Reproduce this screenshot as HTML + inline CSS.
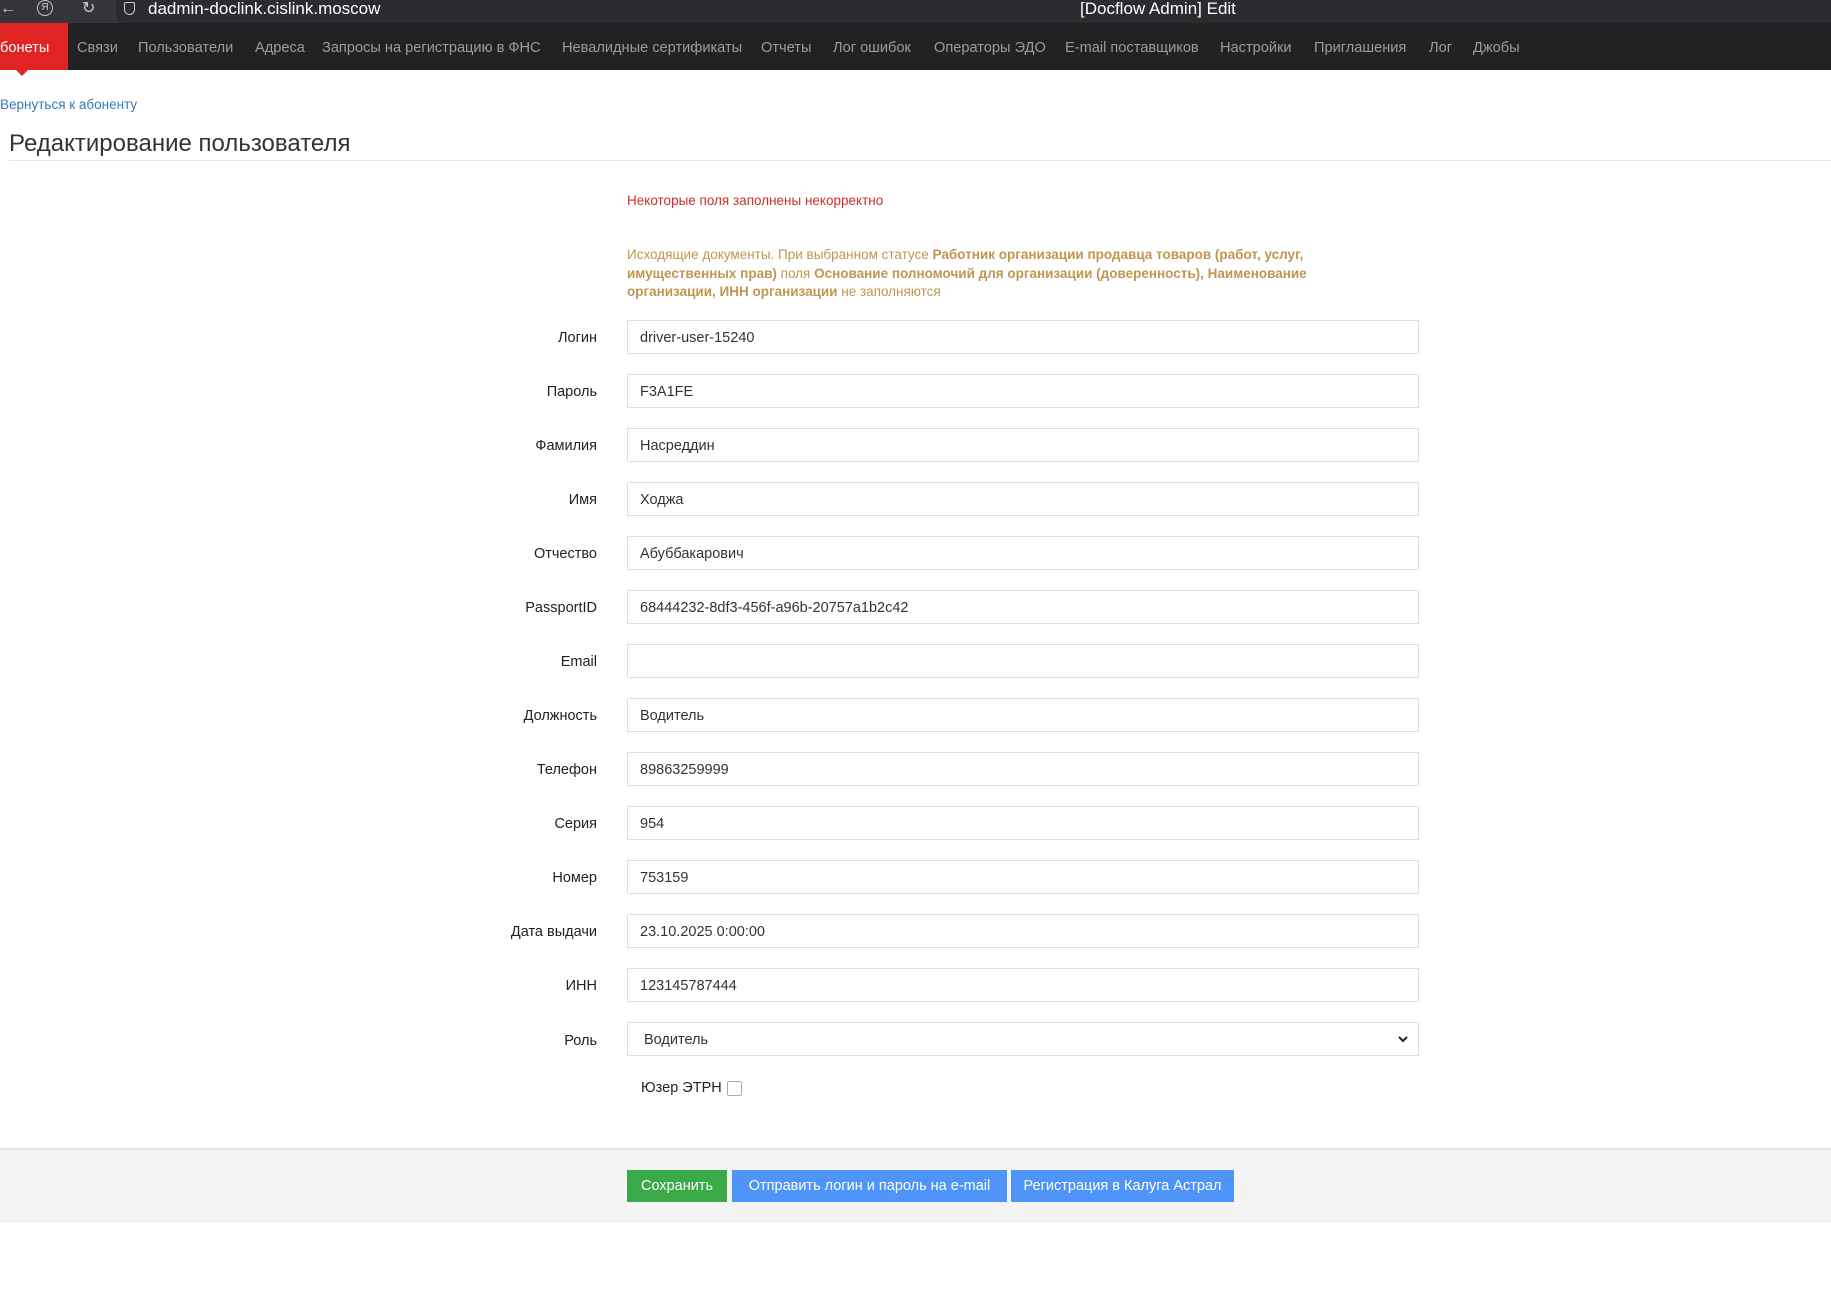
<!DOCTYPE html>
<html><head><meta charset="utf-8"><style>
*{box-sizing:border-box;margin:0;padding:0}
body{width:1831px;height:1311px;background:#fff;font-family:"Liberation Sans","DejaVu Sans",sans-serif;position:relative;overflow:hidden;color:#222}
.top{position:absolute;left:0;top:0;width:1831px;height:23px;background:#35363c}
.url{position:absolute;left:116px;top:0;width:1715px;height:23px;background:#2b2b32;border-radius:0 0 0 8px}
.nav{position:absolute;left:0;top:23px;width:1831px;height:47px;background:#222}
.nav span{position:absolute;top:2px;line-height:47px;font-size:14.6px;color:#9d9d9d;white-space:nowrap}
.act{position:absolute;left:0;top:23px;width:68px;height:47px;background:#e02424}
.tri{position:absolute;left:16px;top:70px;border-left:6px solid transparent;border-right:6px solid transparent;border-top:6px solid #e02424}
.a{position:absolute;white-space:nowrap}
.lab{position:absolute;width:597px;text-align:right;left:0;font-size:14.5px;color:#222;margin-top:3px}
.in{position:absolute;left:627px;width:792px;height:34px;border:1px solid #dedede;font-size:14.5px;line-height:35px;padding-left:12px;color:#333}
.btn{position:absolute;top:1170px;height:32px;line-height:33px;color:#fff;font-size:14.5px;text-align:center}
</style></head><body>
<div class="top"></div><div class="url"></div>
<div class="a" style="left:0;top:0;color:#ccc;font-size:16px;line-height:18px">←</div>
<div class="a" style="left:37px;top:0;width:16px;height:16px;border:1.5px solid #ccc;border-radius:50%;font-size:10px;color:#ccc;text-align:center;line-height:13px">Я</div>
<div class="a" style="left:82px;top:0;color:#ccc;font-size:16px;line-height:18px">↻</div>
<div class="a" style="left:124px;top:2px;width:11px;height:13px;border:1.5px solid #ccc;border-radius:2px 2px 6px 6px"></div>
<div class="a" style="left:148px;top:0;color:#fff;font-size:17px;line-height:18px">dadmin-doclink.cislink.moscow</div>
<div class="a" style="left:1080px;top:0;color:#fff;font-size:17px;line-height:18px">[Docflow Admin] Edit</div>
<div class="nav">
<span style="left:77px">Связи</span><span style="left:138px">Пользователи</span><span style="left:255px">Адреса</span><span style="left:322px">Запросы на регистрацию в ФНС</span><span style="left:562px">Невалидные сертификаты</span><span style="left:761px">Отчеты</span><span style="left:833px">Лог ошибок</span><span style="left:934px">Операторы ЭДО</span><span style="left:1065px">E-mail поставщиков</span><span style="left:1220px">Настройки</span><span style="left:1314px">Приглашения</span><span style="left:1429px">Лог</span><span style="left:1473px">Джобы</span>
</div>
<div class="act"></div><div class="tri"></div>
<div class="a" style="left:0;top:25px;line-height:47px;color:#fff;font-size:14.6px">бонеты</div>
<div class="a" style="left:0;top:97px;color:#337ab7;font-size:13.5px">Вернуться к абоненту</div>
<div class="a" style="left:9px;top:130px;font-size:24px;color:#333;font-weight:300">Редактирование пользователя</div>
<div class="a" style="left:9px;top:160px;width:1822px;height:1px;background:#e8e8e8"></div>
<div class="a" style="left:627px;top:193px;color:#c9302c;font-size:13.5px">Некоторые поля заполнены некорректно</div>
<div class="a" style="left:627px;top:246px;width:735px;white-space:normal;color:#c0964f;font-size:13.5px;line-height:18.7px">Исходящие документы. При выбранном статусе <b>Работник организации продавца товаров (работ, услуг, имущественных прав)</b> поля <b>Основание полномочий для организации (доверенность), Наименование организации, ИНН организации</b> не заполняются</div>

<div class="lab" style="top:327px">Логин</div><div class="in" style="top:320px">driver-user-15240</div>
<div class="lab" style="top:381px">Пароль</div><div class="in" style="top:374px">F3A1FE</div>
<div class="lab" style="top:435px">Фамилия</div><div class="in" style="top:428px">Насреддин</div>
<div class="lab" style="top:489px">Имя</div><div class="in" style="top:482px">Ходжа</div>
<div class="lab" style="top:543px">Отчество</div><div class="in" style="top:536px">Абуббакарович</div>
<div class="lab" style="top:597px">PassportID</div><div class="in" style="top:590px">68444232-8df3-456f-a96b-20757a1b2c42</div>
<div class="lab" style="top:651px">Email</div><div class="in" style="top:644px"></div>
<div class="lab" style="top:705px">Должность</div><div class="in" style="top:698px">Водитель</div>
<div class="lab" style="top:759px">Телефон</div><div class="in" style="top:752px">89863259999</div>
<div class="lab" style="top:813px">Серия</div><div class="in" style="top:806px">954</div>
<div class="lab" style="top:867px">Номер</div><div class="in" style="top:860px">753159</div>
<div class="lab" style="top:921px">Дата выдачи</div><div class="in" style="top:914px">23.10.2025 0:00:00</div>
<div class="lab" style="top:975px">ИНН</div><div class="in" style="top:968px">123145787444</div>
<div class="lab" style="top:1030px">Роль</div><div class="in" style="top:1022px;padding-left:16px">Водитель<svg style="position:absolute;right:10px;top:12px" width="10" height="8" viewBox="0 0 10 8"><path d="M1 2l4 4 4-4" stroke="#222" stroke-width="2" fill="none"/></svg></div>
<div class="a" style="left:641px;top:1080px;font-size:14.5px">Юзер ЭТРН</div>
<div class="a" style="left:727px;top:1081px;width:15px;height:15px;border:1px solid #aaa;border-radius:2px"></div>

<div class="a" style="left:0;top:1148px;width:1831px;height:75px;background:#f4f4f4;border-top:2px solid #e5e5e5"></div>
<div class="btn" style="left:627px;width:100px;background:#3aaa48">Сохранить</div>
<div class="btn" style="left:732px;width:275px;background:#4f94f8">Отправить логин и пароль на e-mail</div>
<div class="btn" style="left:1011px;width:223px;background:#4f94f8">Регистрация в Калуга Астрал</div>
</body></html>
